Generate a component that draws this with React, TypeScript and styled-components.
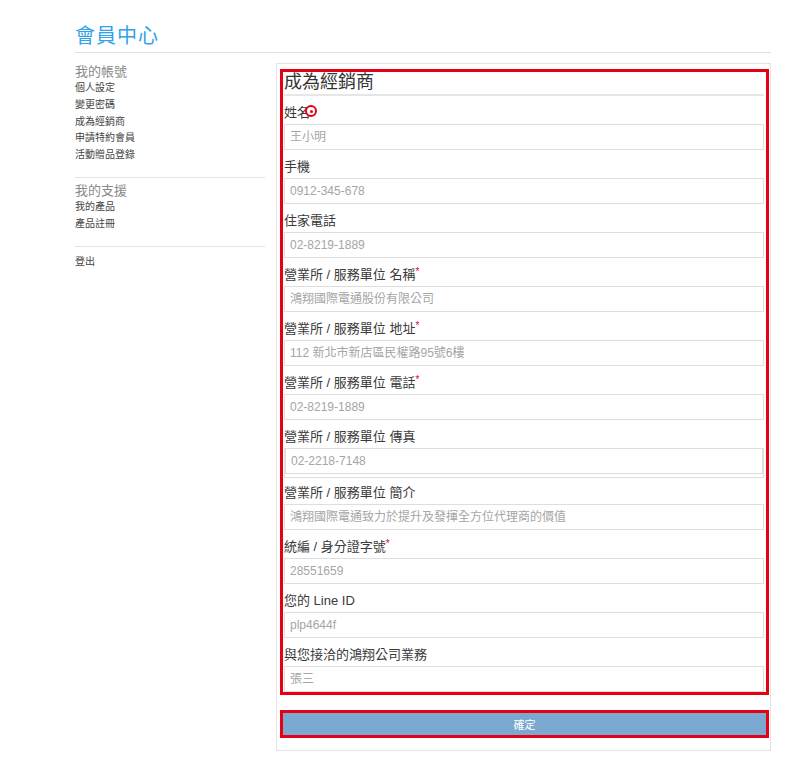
import React from "react";
import styled, { createGlobalStyle } from "styled-components";

const GlobalStyle = createGlobalStyle`
   html, body {
      margin: 0;
      padding: 0;
      background: #fff;
   }
   body {
      font-family: "Liberation Sans", Arial, "Noto Sans CJK TC", sans-serif;
      color: #333;
   }
`;

const Page = styled.div`
   width: 696px;
   margin-left: 75px;
`;

const Header = styled.div`
   padding-top: 22px;
   padding-bottom: 2px;
   border-bottom: 1px solid #e1e1e1;
`;

const PageTitle = styled.h1`
   margin: 0;
   font-size: 20px;
   line-height: 28px;
   font-weight: 400;
   color: #2ea3ea;
   letter-spacing: 1px;
`;

const Body = styled.div`
   display: flex;
   align-items: flex-start;
   margin-top: 10px;
`;

const Sidebar = styled.div`
   width: 190px;
   flex-shrink: 0;
   margin-right: 11px;
`;

const MenuGroup = styled.div<{ $last?: boolean }>`
   padding-top: ${({ $last }) => ($last ? "3px" : "0")};
   padding-bottom: ${({ $last }) => ($last ? "0" : "13px")};
   border-bottom: ${({ $last }) => ($last ? "none" : "1px solid #e3e3e3")};
   margin-bottom: ${({ $last }) => ($last ? "0" : "4px")};
`;

const MenuTitle = styled.div`
   font-size: 13px;
   line-height: 17px;
   color: #8a8a8a;
`;

const MenuItem = styled.div`
   font-size: 10px;
   line-height: 16.8px;
   color: #444;
`;

const Panel = styled.div`
   flex: 1;
   border: 1px solid #e3e3e3;
   padding: 5px 1px 12px 3px;
`;

const FormBox = styled.div`
   border: 3px solid #e60012;
   padding: 0 2px 0 1px;
`;

const FormTitle = styled.h2`
   margin: 0;
   font-size: 18px;
   line-height: 20px;
   font-weight: 400;
   color: #333;
   padding-bottom: 2px;
   border-bottom: 2px solid #e6e6e6;
`;

const Field = styled.div<{ $double?: boolean }>`
   padding-top: 8px;
   margin-bottom: ${({ $double }) => ($double ? "-2px" : "0")};
`;

const Label = styled.div`
   position: relative;
   font-size: 13px;
   line-height: 18px;
   color: #3a3a3a;
   margin-bottom: 2px;
`;

const Star = styled.span`
   color: #e60012;
   font-size: 10px;
   vertical-align: top;
   line-height: 12px;
`;

const Marker = styled.span`
   position: absolute;
   left: 21px;
   top: 1px;
   width: 8px;
   height: 8px;
   border: 2.5px solid #e60012;
   border-radius: 50%;
   background: #fff;
   &::after {
      content: "";
      position: absolute;
      left: 2.5px;
      top: 2.5px;
      width: 3px;
      height: 3px;
      border-radius: 50%;
      background: #e60012;
   }
`;

const InputShell = styled.div<{ $double?: boolean }>`
   border: ${({ $double }) => ($double ? "1px solid #dedede" : "none")};
   border-top: none;
   padding-bottom: ${({ $double }) => ($double ? "3px" : "0")};
`;

const Input = styled.input`
   display: block;
   box-sizing: border-box;
   width: 100%;
   height: 26px;
   margin: 0;
   padding: 0 5px;
   border: 1px solid #dedede;
   font-family: "Liberation Sans", Arial, "Noto Sans CJK TC", sans-serif;
   font-size: 12px;
   color: #333;
   background: #fff;
   outline: none;
   &::placeholder {
      color: #a5a5a5;
   }
`;

const ButtonBox = styled.div`
   margin-top: 15px;
   border: 3px solid #e60012;
`;

const SubmitButton = styled.button`
   display: block;
   width: 100%;
   height: 22px;
   margin: 0;
   border: none;
   background: #7ba8d0;
   color: #fff;
   font-family: "Liberation Sans", Arial, "Noto Sans CJK TC", sans-serif;
   font-size: 11px;
   cursor: pointer;
`;

interface FieldDef {
   label: string;
   placeholder: string;
   required?: boolean;
   marker?: boolean;
   double?: boolean;
}

const fields: FieldDef[] = [
   { label: "姓名", placeholder: "王小明", marker: true },
   { label: "手機", placeholder: "0912-345-678" },
   { label: "住家電話", placeholder: "02-8219-1889" },
   { label: "營業所 / 服務單位 名稱", placeholder: "鴻翔國際電通股份有限公司", required: true },
   { label: "營業所 / 服務單位 地址", placeholder: "112 新北市新店區民權路95號6樓", required: true },
   { label: "營業所 / 服務單位 電話", placeholder: "02-8219-1889", required: true },
   { label: "營業所 / 服務單位 傳真", placeholder: "02-2218-7148", double: true },
   { label: "營業所 / 服務單位 簡介", placeholder: "鴻翔國際電通致力於提升及發揮全方位代理商的價值" },
   { label: "統編 / 身分證字號", placeholder: "28551659", required: true },
   { label: "您的 Line ID", placeholder: "plp4644f" },
   { label: "與您接洽的鴻翔公司業務", placeholder: "張三" },
];

const App: React.FC = () => {
   return (
      <>
         <GlobalStyle />
         <Page>
            <Header>
               <PageTitle>會員中心</PageTitle>
            </Header>
            <Body>
               <Sidebar>
                  <MenuGroup>
                     <MenuTitle>我的帳號</MenuTitle>
                     <MenuItem>個人設定</MenuItem>
                     <MenuItem>變更密碼</MenuItem>
                     <MenuItem>成為經銷商</MenuItem>
                     <MenuItem>申請特約會員</MenuItem>
                     <MenuItem>活動贈品登錄</MenuItem>
                  </MenuGroup>
                  <MenuGroup>
                     <MenuTitle>我的支援</MenuTitle>
                     <MenuItem>我的產品</MenuItem>
                     <MenuItem>產品註冊</MenuItem>
                  </MenuGroup>
                  <MenuGroup $last>
                     <MenuItem>登出</MenuItem>
                  </MenuGroup>
               </Sidebar>
               <Panel>
                  <FormBox>
                     <FormTitle>成為經銷商</FormTitle>
                     {fields.map((f) => (
                        <Field key={f.label} $double={f.double}>
                           <Label>
                              {f.label}
                              {f.required && <Star>*</Star>}
                              {f.marker && <Marker />}
                           </Label>
                           <InputShell $double={f.double}>
                              <Input placeholder={f.placeholder} />
                           </InputShell>
                        </Field>
                     ))}
                  </FormBox>
                  <ButtonBox>
                     <SubmitButton>確定</SubmitButton>
                  </ButtonBox>
               </Panel>
            </Body>
         </Page>
      </>
   );
};

export default App;
